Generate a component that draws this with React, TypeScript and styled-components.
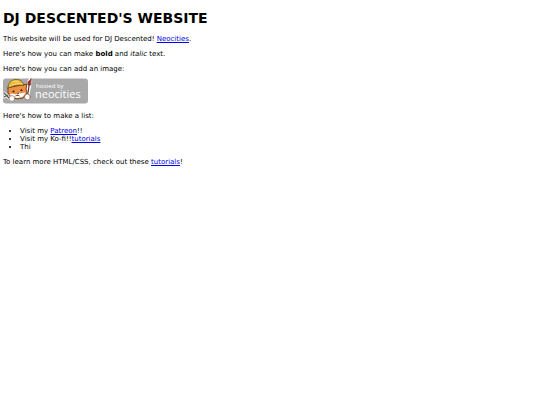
import React from "react";
import styled, { createGlobalStyle } from "styled-components";

const GlobalStyle = createGlobalStyle`
  body {
    margin: 0;
    background: #fff;
    color: #000;
    font-family: "DejaVu Sans", Verdana, sans-serif;
    font-size: 7px;
    line-height: 8px;
  }
`;

const Page = styled.main`
  display: flex;
  flex-direction: column;
  align-items: flex-start;
  gap: 7px;
  padding: 10px 3px;
`;

const Title = styled.h1`
  margin: 0 0 1px;
  font-size: 14px;
  line-height: 17px;
  font-weight: bold;
`;

const Paragraph = styled.p`
  margin: 0;
`;

const Link = styled.a`
  color: #0000ee;
  text-decoration: underline;
`;

const List = styled.ul`
  margin: 0;
  padding-left: 17px;
`;

const BadgeLink = styled.a`
  display: block;
  margin: -2px 0 1px;
`;

const Badge = styled.svg`
  display: block;
  width: 85px;
  height: 26px;
`;

function NeocitiesBadge() {
  return (
    <Badge viewBox="0 0 85 26" role="img" aria-label="hosted by neocities">
      <rect x="0" y="0.5" width="85" height="25" rx="3" fill="#a9a9a9" />
      <g strokeLinejoin="round" strokeLinecap="round">
        <path d="M1 15 8 22M1 19l4-2" stroke="#fff" strokeWidth="3" />
        <path d="M1 15 8 22M1 19l4-2" stroke="#555" strokeWidth="1.3" />
        <path d="M27 3 24 18" stroke="#fff" strokeWidth="4.4" />
        <path d="M26.3 6 24.500 18" stroke="#703b2b" strokeWidth="1.3" />
        <path d="M28 1 25 4l0 3 2.500 0z" fill="#a92935" stroke="#713027" strokeWidth="0.7" />
        <path
          d="M5 10 5 15l3 4 6 2 6-1 4-5-1-4 1-5-5 1z"
          fill="#ef9143"
          stroke="#6b3a1c"
          strokeWidth="0.9"
        />
        <path d="M6.500 16.500l3-1 3 1 2-2 3 1 4-1 1 0.500-3 4-5.500 1-5.500-1.500z" fill="#fff" />
        <path
          d="M5 10C5 5 8 2 12 1.500s7 1 8 4l1 2c-6-1-10 0-16 2.500z"
          fill="#e9b93f"
          stroke="#735018"
          strokeWidth="0.8"
        />
        <path d="M7 8c4-2 8-3 12-2M9 4c2-1 5-1 7 0" stroke="#ffdb6b" strokeWidth="1" fill="none" />
        <circle cx="10.500" cy="13.500" r="1" fill="#302018" />
        <circle cx="18.500" cy="12.300" r="1" fill="#302018" />
        <path d="M14 15h2l-1 1zM12.500 18l2-1 2 1" fill="#5f2920" stroke="#5f2920" strokeWidth="0.5" />
        <circle cx="9" cy="20.500" r="2.900" fill="#fff" stroke="#76513a" strokeWidth="0.6" />
        <circle cx="24.500" cy="19" r="2.900" fill="#fff" stroke="#76513a" strokeWidth="0.6" />
      </g>
      <g fill="#fff" fontFamily="'Open Sans', sans-serif">
        <text x="33" y="10" fontSize="6">hosted by</text>
        <text x="32" y="20" fontSize="11" fontWeight="500">neocities</text>
      </g>
    </Badge>
  );
}

export default function App() {
  return (
    <>
      <GlobalStyle />
      <Page>
        <Title>DJ DESCENTED'S WEBSITE</Title>
        <Paragraph>
          This website will be used for DJ Descented! <Link href="https://neocities.org">Neocities</Link>.
        </Paragraph>
        <Paragraph>
          Here's how you can make <strong>bold</strong> and <em>italic</em> text.
        </Paragraph>
        <Paragraph>Here's how you can add an image:</Paragraph>
        <BadgeLink href="https://neocities.org">
          <NeocitiesBadge />
        </BadgeLink>
        <Paragraph>Here's how to make a list:</Paragraph>
        <List>
          <li>
            Visit my <Link href="https://www.patreon.com">Patreon</Link>!!
          </li>
          <li>
            Visit my Ko-fi!!<Link href="https://neocities.org/tutorials">tutorials</Link>
          </li>
          <li>Thi</li>
        </List>
        <Paragraph>
          To learn more HTML/CSS, check out these <Link href="https://neocities.org/tutorials">tutorials</Link>!
        </Paragraph>
      </Page>
    </>
  );
}
